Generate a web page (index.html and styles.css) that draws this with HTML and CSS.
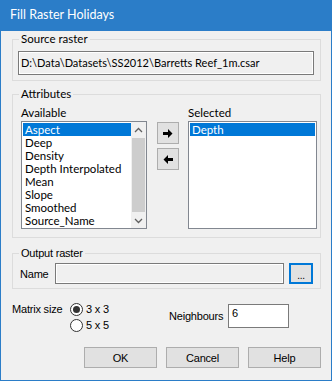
FILE: index.html
```html
<!DOCTYPE html>
<html>
<head>
<meta charset="utf-8">
<link rel="stylesheet" href="styles.css">
</head>
<body>
<div class="window">
  <div class="titlebar">Fill Raster Holidays</div>
  <div class="content">
    <fieldset class="group g1">
      <legend>Source raster</legend>
      <div class="g1-body">
        <div class="readonly">D:\Data\Datasets\SS2012\Barretts Reef_1m.csar</div>
      </div>
    </fieldset>

    <fieldset class="group g2">
      <legend>Attributes</legend>
      <div class="g2-body">
        <div class="col avail">
          <div class="lbl">Available</div>
          <div class="listbox">
            <div class="items">
              <div class="item sel">Aspect</div>
              <div class="item">Deep</div>
              <div class="item">Density</div>
              <div class="item">Depth Interpolated</div>
              <div class="item">Mean</div>
              <div class="item">Slope</div>
              <div class="item">Smoothed</div>
              <div class="item">Source_Name</div>
            </div>
            <div class="scrollbar">
              <div class="sb-arrow">
                <svg width="9" height="6" viewBox="0 0 9 6"><path d="M1 5 L4.5 1.5 L8 5" fill="none" stroke="#606060" stroke-width="1.3"/></svg>
              </div>
              <div class="sb-thumb"></div>
              <div class="sb-arrow">
                <svg width="9" height="6" viewBox="0 0 9 6"><path d="M1 1 L4.5 4.5 L8 1" fill="none" stroke="#606060" stroke-width="1.3"/></svg>
              </div>
            </div>
          </div>
        </div>
        <div class="movebtns">
          <div class="btn arrowbtn">
            <svg width="10" height="9" viewBox="0 0 10 9"><path d="M0 3 H5 V0 L9.5 4.5 L5 9 V6 H0 Z" fill="#000"/></svg>
          </div>
          <div class="btn arrowbtn">
            <svg width="10" height="9" viewBox="0 0 10 9"><path d="M10 3 H5 V0 L0.5 4.5 L5 9 V6 H10 Z" fill="#000"/></svg>
          </div>
        </div>
        <div class="col selcol">
          <div class="lbl">Selected</div>
          <div class="listbox plain">
            <div class="items">
              <div class="item sel">Depth</div>
            </div>
          </div>
        </div>
      </div>
    </fieldset>

    <fieldset class="group g3">
      <legend class="narrow">Output raster</legend>
      <div class="g3-body">
        <span class="narrow name-lbl">Name</span>
        <div class="field disabled"></div>
        <div class="btn browse narrow">...</div>
      </div>
    </fieldset>

    <div class="options">
      <div class="matrix">
        <span class="narrow matrix-lbl">Matrix size</span>
        <div class="radios">
          <div class="radio-row"><span class="radio on"></span><span class="narrow">3 x 3</span></div>
          <div class="radio-row"><span class="radio"></span><span class="narrow">5 x 5</span></div>
        </div>
      </div>
      <div class="neigh">
        <span class="narrow neigh-lbl">Neighbours</span>
        <div class="field numfield">6</div>
      </div>
    </div>

    <div class="buttons">
      <div class="btn push narrow">OK</div>
      <div class="btn push narrow">Cancel</div>
      <div class="btn push narrow">Help</div>
    </div>
  </div>
</div>
</body>
</html>
```

FILE: styles.css
```css
html, body {
  margin: 0;
  padding: 0;
  background: #f0f0f0;
}
body {
  font-family: "Lato", "Liberation Sans", sans-serif;
  font-size: 11.5px;
  color: #000;
}
.window {
  width: 332px;
  height: 381px;
  box-sizing: border-box;
  border: 1px solid #2b7dc8;
  border-top: none;
  background: #f0f0f0;
  display: flex;
  flex-direction: column;
}
.titlebar {
  height: 31px;
  margin: 0 -1px;
  background: #2b7dc8;
  color: #fff;
  font-family: "Lato", sans-serif;
  font-size: 12.5px;
  line-height: 30px;
  padding-left: 10px;
}
.content {
  padding: 1px 10px 0 11px;
  display: flex;
  flex-direction: column;
}
.group {
  margin: 0;
  padding: 0;
  border: 1px solid #dcdcdc;
  min-width: 0;
}
.group legend {
  margin-left: 6px;
  padding: 0 2px;
  line-height: 14px;
  height: 14px;
}
.narrow {
  font-family: "Liberation Sans", sans-serif;
  font-size: 11px;
  letter-spacing: -0.2px;
}
.g1-body {
  padding: 5px 6px 5px 5px;
}
.readonly {
  height: 24px;
  box-sizing: border-box;
  border: 1px solid #7a7a7a;
  box-shadow: inset 0 0 0 1px #fff;
  background: #f0f0f0;
  padding-left: 2px;
  line-height: 21px;
  white-space: nowrap;
  overflow: hidden;
  font-size: 11px;
}
.g2 {
  margin-top: 6px;
}
.g2-body {
  display: flex;
  padding: 5px 3px 8px 8px;
}
.col {
  display: flex;
  flex-direction: column;
}
.lbl {
  line-height: 14px;
  height: 14px;
  margin-bottom: 1px;
}
.avail .listbox { width: 126px; }
.selcol .listbox { width: 129px; }
.listbox {
  height: 108px;
  box-sizing: border-box;
  border: 1px solid #828790;
  background: #fff;
  display: flex;
  padding: 1px;
}
.items {
  flex: 1;
  display: flex;
  flex-direction: column;
}
.item {
  height: 13px;
  line-height: 13px;
  padding-left: 2px;
  white-space: nowrap;
  font-size: 11.5px;
}
.item.sel {
  background: #0078d7;
  color: #fff;
}
.scrollbar {
  width: 15px;
  margin: -1px -1px -1px 0;
  display: flex;
  flex-direction: column;
  background: #f0f0f0;
}
.sb-arrow {
  height: 15px;
  display: flex;
  align-items: center;
  justify-content: center;
}
.sb-thumb {
  flex: 1;
  background: #cdcdcd;
  margin: 1px 1px;
}
.movebtns {
  display: flex;
  flex-direction: column;
  gap: 4px;
  padding-top: 16px;
  margin: 0 9px 0 10px;
}
.btn {
  box-sizing: border-box;
  background: #e1e1e1;
  border: 1px solid #adadad;
  display: flex;
  align-items: center;
  justify-content: center;
}
.arrowbtn {
  width: 22px;
  height: 22px;
}
.g3 {
  margin-top: 8px;
}
.g3-body {
  display: flex;
  align-items: center;
  padding: 3px 7px 4px 7px;
}
.name-lbl {
  width: 35px;
}
.field {
  box-sizing: border-box;
  border: 1px solid #7a7a7a;
  background: #fff;
}
.field.disabled {
  width: 229px;
  height: 21px;
  background: #f0f0f0;
  box-shadow: inset 0 0 0 1px #fff;
}
.browse {
  width: 24px;
  height: 21px;
  margin-left: 5px;
  border: 2px solid #0078d7;
  font-size: 10px;
  padding-top: 3px;
}
.options {
  display: flex;
  margin-top: 13px;
}
.matrix {
  display: flex;
  align-items: flex-start;
  width: 157px;
}
.matrix-lbl {
  width: 58px;
  line-height: 14px;
}
.radios {
  display: flex;
  flex-direction: column;
  gap: 2px;
}
.radio-row {
  display: flex;
  align-items: center;
  height: 14px;
  gap: 3px;
}
.radio {
  width: 13px;
  height: 13px;
  box-sizing: border-box;
  border: 1px solid #333;
  border-radius: 50%;
  background: #fff;
  display: flex;
  align-items: center;
  justify-content: center;
}
.radio.on::after {
  content: "";
  width: 7px;
  height: 7px;
  border-radius: 50%;
  background: #333;
}
.neigh {
  display: flex;
  align-items: center;
  margin-top: 2px;
  height: 24px;
}
.neigh-lbl {
  width: 59px;
}
.numfield {
  width: 61px;
  height: 24px;
  padding: 1px 3px;
  line-height: 14px;
  font-family: "Liberation Sans", sans-serif;
  font-size: 11px;
}
.buttons {
  display: flex;
  justify-content: flex-end;
  gap: 9px;
  margin-top: 15px;
}
.push {
  width: 73px;
  height: 21px;
}
```
